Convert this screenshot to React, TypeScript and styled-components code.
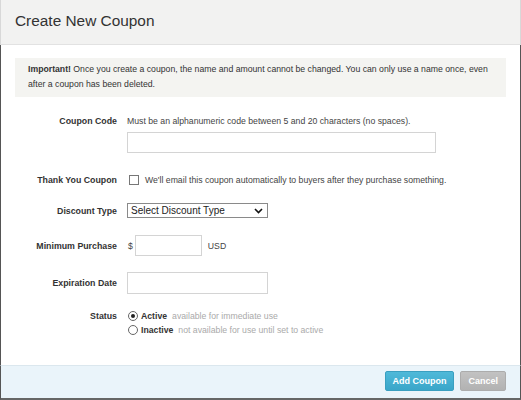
import React from "react";
import styled, { createGlobalStyle } from "styled-components";

const Global = createGlobalStyle`
  html, body { margin: 0; padding: 0; background: #fff; }
  body { font-family: "Liberation Sans", Arial, sans-serif; }
  * { box-sizing: border-box; }
`;

const Frame = styled.div`
  width: 521px;
  height: 400px;
  display: flex;
  flex-direction: column;
  background: #fff;
  overflow: hidden;
`;

const Header = styled.div`
  height: 45px;
  flex: none;
  background: #f2f2f1;
  border-bottom: 1px solid #e2e2e2;
  border-left: 1px solid #d8d8d8;
  border-right: 1px solid #d8d8d8;
  display: flex;
  align-items: center;
  padding-left: 14px;
  padding-bottom: 3px;
`;

const Title = styled.h1`
  margin: 0;
  font-size: 15.4px;
  font-weight: normal;
  color: #333;
`;

const Body = styled.div`
  flex: 1;
  border-left: 1px solid #555;
  border-right: 1px solid #555;
  padding: 13px 14px 0 14px;
`;

const Notice = styled.p`
  margin: 0;
  background: #f4f4f1;
  padding: 4px 13px 5px 13px;
  font-size: 8.7px;
  line-height: 15px;
  color: #333;
`;

const Form = styled.div`
  display: flex;
  flex-direction: column;
  padding-top: 18px;
`;

const Row = styled.div<{ $top: number; $align?: string }>`
  display: grid;
  grid-template-columns: 102px 1fr;
  column-gap: 10px;
  align-items: ${(p) => p.$align || "center"};
  margin-top: ${(p) => p.$top}px;
`;

const Label = styled.div`
  text-align: right;
  font-size: 8.8px;
  font-weight: bold;
  color: #333;
  line-height: 12px;
`;

const Field = styled.div`
  display: flex;
  flex-direction: column;
  align-items: flex-start;
  font-size: 8.7px;
  color: #444;
  line-height: 12px;
`;

const Inline = styled.div`
  display: flex;
  align-items: center;
  font-size: 8.7px;
  color: #444;
  line-height: 12px;
`;

const TextBox = styled.div<{ $w: number; $h: number; $mt?: number }>`
  width: ${(p) => p.$w}px;
  height: ${(p) => p.$h}px;
  margin-top: ${(p) => p.$mt || 0}px;
  border: 1px solid #d4d4d4;
  background: #fff;
`;

const Check = styled.span`
  width: 10px;
  height: 10px;
  border: 1px solid #777;
  background: #fff;
  margin-left: 2px;
  margin-right: 6px;
  flex: none;
`;

const Select = styled.div`
  width: 141px;
  height: 15px;
  border: 1px solid #8a8a8a;
  display: flex;
  align-items: center;
  justify-content: space-between;
  padding: 0 4px 0 3px;
  font-size: 10px;
  color: #222;
`;

const Prefix = styled.span`
  margin: 0 2px 0 1px;
`;

const Suffix = styled.span`
  margin-left: 6px;
`;

const Radio = styled.span<{ $on?: boolean }>`
  width: 10px;
  height: 10px;
  border-radius: 50%;
  border: 1px solid #666;
  background: #fff;
  margin-left: 1px;
  margin-right: 3px;
  flex: none;
  display: flex;
  align-items: center;
  justify-content: center;
  &::after {
    content: "";
    width: 4px;
    height: 4px;
    border-radius: 50%;
    background: ${(p) => (p.$on ? "#222" : "transparent")};
  }
`;

const Strong = styled.span`
  font-weight: bold;
  color: #333;
  margin-right: 5px;
`;

const Muted = styled.span`
  color: #aaa;
`;

const StatusLines = styled.div`
  display: flex;
  flex-direction: column;
  gap: 2px;
`;

const Footer = styled.div`
  height: 35px;
  flex: none;
  background: #eaf4fa;
  border-top: 1px solid #dbe7ee;
  border-left: 1px solid #555;
  border-right: 1px solid #555;
  border-bottom: 2px solid #666;
  display: flex;
  align-items: center;
  justify-content: flex-end;
  gap: 6px;
  padding-right: 14px;
  padding-bottom: 2px;
`;

const Button = styled.div<{ $primary?: boolean }>`
  height: 20px;
  padding: 0 7px;
  border-radius: 2px;
  display: flex;
  align-items: center;
  font-size: 9px;
  font-weight: bold;
  color: #fff;
  background: ${(p) =>
    p.$primary
      ? "linear-gradient(#4fb9d9, #3aa6c9)"
      : "linear-gradient(#c2c2c2, #b2b2b2)"};
  border: 1px solid ${(p) => (p.$primary ? "#3a9fc0" : "#acacac")};
`;

export default function App() {
  return (
    <>
      <Global />
      <Frame>
        <Header>
          <Title>Create New Coupon</Title>
        </Header>
        <Body>
          <Notice>
            <b>Important!</b> Once you create a coupon, the name and amount cannot be changed. You can only use a name once, even
            after a coupon has been deleted.
          </Notice>
          <Form>
            <Row $top={0} $align="start">
              <Label>Coupon Code</Label>
              <Field>
                <span>Must be an alphanumeric code between 5 and 20 characters (no spaces).</span>
                <TextBox $w={309} $h={21} $mt={5} />
              </Field>
            </Row>
            <Row $top={21}>
              <Label>Thank You Coupon</Label>
              <Inline>
                <Check />
                <span>We'll email this coupon automatically to buyers after they purchase something.</span>
              </Inline>
            </Row>
            <Row $top={17}>
              <Label>Discount Type</Label>
              <Inline>
                <Select>
                  <span>Select Discount Type</span>
                  <svg width="9" height="6" viewBox="0 0 9 6">
                    <path d="M1 1 L4.5 4.5 L8 1" fill="none" stroke="#111" strokeWidth="1.6" />
                  </svg>
                </Select>
              </Inline>
            </Row>
            <Row $top={17}>
              <Label>Minimum Purchase</Label>
              <Inline>
                <Prefix>$</Prefix>
                <TextBox $w={67} $h={21} />
                <Suffix>USD</Suffix>
              </Inline>
            </Row>
            <Row $top={16}>
              <Label>Expiration Date</Label>
              <Inline>
                <TextBox $w={141} $h={22} />
              </Inline>
            </Row>
            <Row $top={16} $align="start">
              <Label>Status</Label>
              <StatusLines>
                <Inline>
                  <Radio $on />
                  <Strong>Active</Strong>
                  <Muted>available for immediate use</Muted>
                </Inline>
                <Inline>
                  <Radio />
                  <Strong>Inactive</Strong>
                  <Muted>not available for use until set to active</Muted>
                </Inline>
              </StatusLines>
            </Row>
          </Form>
        </Body>
        <Footer>
          <Button $primary>Add Coupon</Button>
          <Button>Cancel</Button>
        </Footer>
      </Frame>
    </>
  );
}
